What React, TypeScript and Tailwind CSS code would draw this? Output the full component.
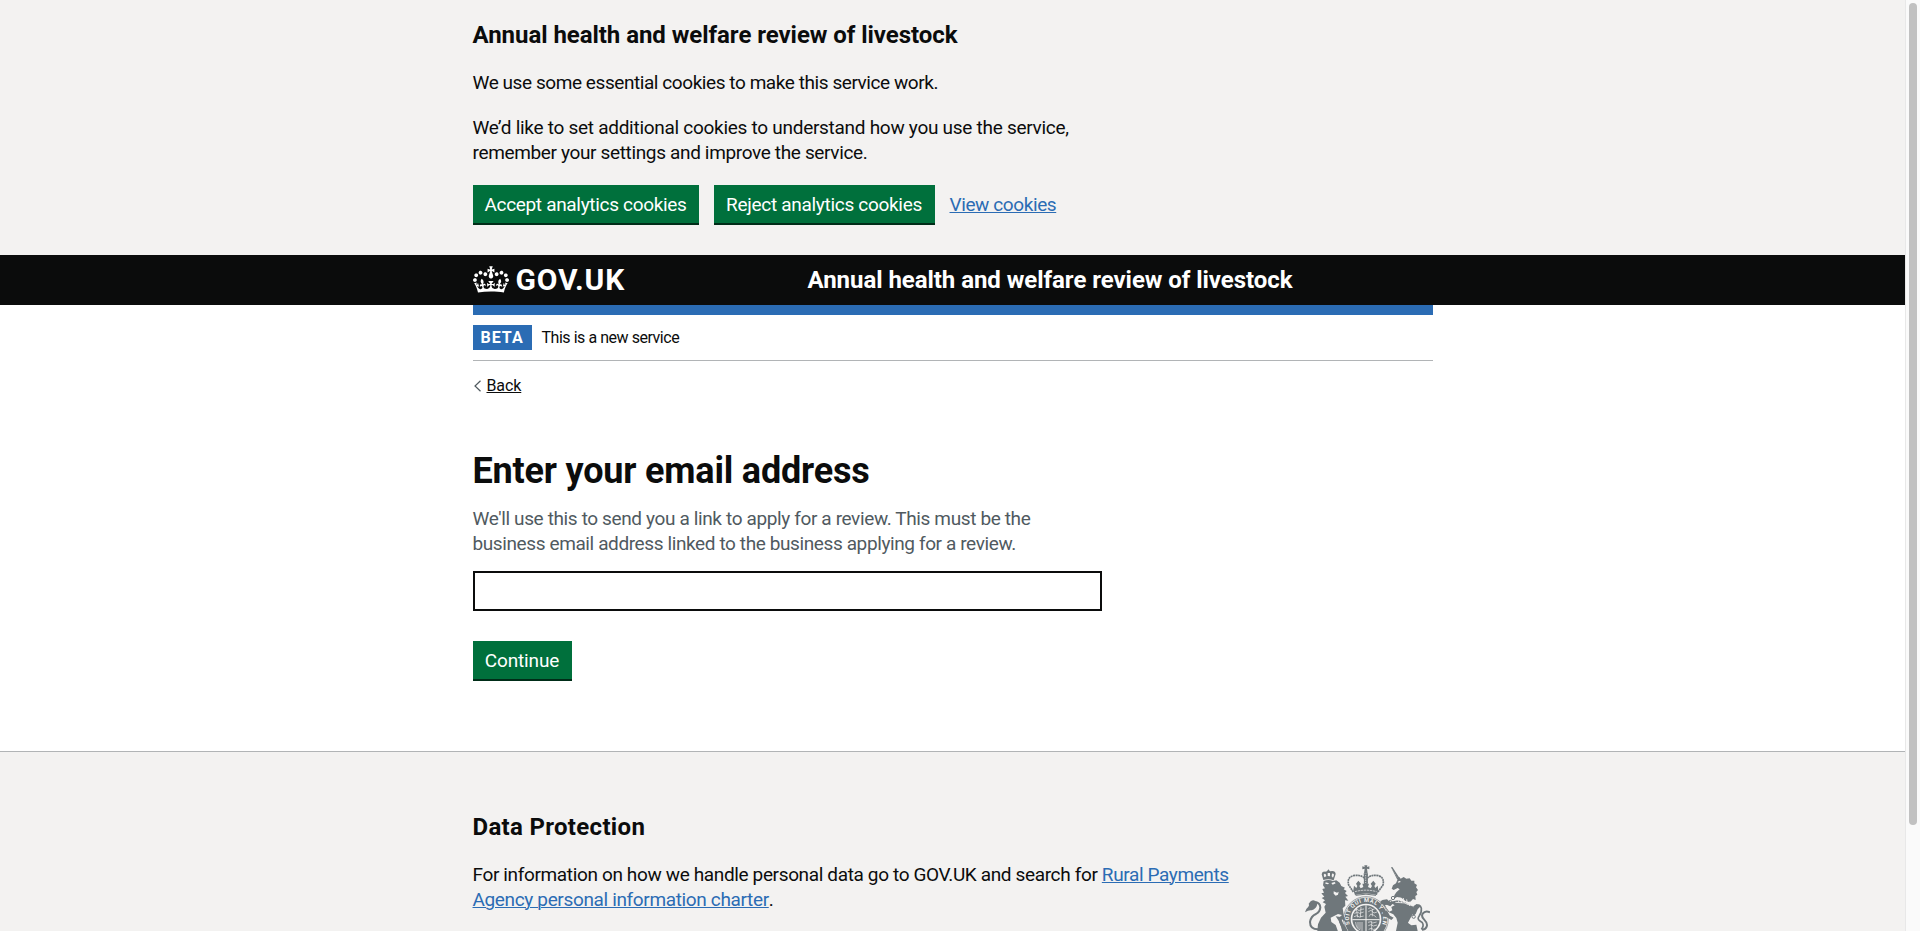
function Crown() {
  return (
    <svg className="-mt-[2px] h-[27px] w-9 shrink-0" viewBox="0 0 132 97" aria-hidden="true">
      <path
        fill="currentColor"
        fillRule="evenodd"
        d="M25 30.2c3.5 1.5 7.7-.2 9.1-3.7 1.5-3.6-.2-7.8-3.9-9.2-3.6-1.4-7.6.3-9.1 3.9-1.4 3.5.3 7.5 3.9 9zM9 39.5c3.6 1.5 7.8-.2 9.2-3.7 1.5-3.6-.2-7.8-3.9-9.1-3.6-1.5-7.6.2-9.1 3.8-1.4 3.5.3 7.5 3.8 9zM4.4 57.2c3.5 1.5 7.7-.2 9.1-3.8 1.5-3.6-.2-7.7-3.9-9.1-3.5-1.5-7.6.3-9.1 3.8-1.4 3.5.3 7.6 3.9 9.1zm38.3-21.4c3.5 1.5 7.7-.2 9.1-3.8 1.5-3.6-.2-7.7-3.9-9.1-3.6-1.5-7.6.3-9.1 3.8-1.3 3.6.4 7.7 3.9 9.1zm64.4-5.6c-3.6 1.5-7.8-.2-9.1-3.7-1.5-3.6.2-7.8 3.8-9.2 3.6-1.4 7.7.3 9.2 3.9 1.3 3.5-.4 7.5-3.9 9zm15.9 9.3c-3.6 1.5-7.7-.2-9.1-3.7-1.5-3.6.2-7.8 3.7-9.1 3.6-1.5 7.7.2 9.2 3.8 1.5 3.5-.3 7.5-3.8 9zm4.7 17.7c-3.6 1.5-7.8-.2-9.2-3.8-1.5-3.6.2-7.7 3.9-9.1 3.6-1.5 7.7.3 9.2 3.8 1.3 3.5-.4 7.6-3.9 9.1zM89.3 35.8c-3.6 1.5-7.8-.2-9.2-3.8-1.4-3.6.2-7.7 3.9-9.1 3.6-1.5 7.7.3 9.2 3.8 1.4 3.6-.3 7.7-3.9 9.1zM69.7 17.7l8.9 4.7V9.3l-8.9 2.8c-.2-.3-.5-.6-.9-.9L72.4 0H59.6l3.5 11.2c-.3.3-.6.5-.9.9l-8.8-2.8v13.1l8.8-4.7c.3.3.6.7.9.9l-5 15.4v.1c-.2.8-.4 1.6-.4 2.4 0 4.1 3.1 7.5 7 8.1h.2c.3 0 .7.1 1 .1.4 0 .7 0 1-.1h.2c4-.6 7.1-4.1 7.1-8.1 0-.8-.1-1.7-.4-2.4V34l-5.1-15.4c.4-.2.7-.6 1-.9zM66 92.8c16.9 0 32.8 1.1 47.1 3.2 4-16.9 8.9-26.7 14-33.5l-9.6-3.4c1 4.9 1.1 7.2 0 10.2-1.5-1.4-3-4.3-4.2-8.7L108.6 76c2.8-2 5-3.2 7.5-3.3-4.4 9.4-10 11.9-13.6 11.2-4.3-.8-6.3-4.6-5.6-7.9 1-4.7 5.7-5.9 8-.5 4.3-8.7-3-11.4-7.6-8.8 7.1-7.2 7.9-13.5 2.1-21.1-8 6.1-8.1 12.3-4.5 20.8-4.7-5.4-12.1-2.5-9.5 6.2 3.4-5.2 7.9-2 7.2 3.1-.6 4.3-6.4 7.8-13.5 7.2-10.3-.9-10.9-8-11.2-13.8 2.5-.5 7.1 1.8 11 7.3L80.2 60c-4.1 4.4-8 5.3-12.3 5.4 1.4-4.4 8-11.6 8-11.6H55.5s6.4 7.2 7.9 11.6c-4.2-.1-8-1-12.3-5.4l1.4 16.4c3.9-5.5 8.5-7.7 10.9-7.3-.3 5.8-.9 12.8-11.1 13.8-7.2.6-12.9-2.9-13.5-7.2-.7-5 3.8-8.3 7.1-3.1 2.7-8.7-4.6-11.6-9.4-6.2 3.7-8.5 3.6-14.7-4.6-20.8-5.8 7.6-5 13.9 2.2 21.1-4.7-2.6-11.9.1-7.7 8.8 2.3-5.5 7.1-4.2 8.1.5.7 3.3-1.3 7.1-5.7 7.9-3.5.7-9-1.8-13.5-11.2 2.5.1 4.7 1.3 7.5 3.3l-4.7-15.4c-1.2 4.4-2.7 7.2-4.3 8.7-1.1-3-.9-5.3 0-10.2l-9.5 3.4c5 6.9 9.9 16.7 14 33.5 14.8-2.1 30.8-3.2 47.7-3.2z"
      />
    </svg>
  );
}

function RoyalArms() {
  return (
    <svg className="h-[66px] w-[125px] shrink-0" viewBox="45 45 375 198" fill="#6f777b" stroke="none" aria-hidden="true">
      {/* Lion crown */}
      <path d="M100 90l-5-17q1-10 10-8l6-1 4-6 5 6q16-4 17 8l-6 19q-15-6-31-1z" />
      <path d="M103 82l-2-8q4-5 7 0l1 5zM113 78v-9h7v10zM125 79l1-8q6-2 6 4l-3 8z" fill="#f3f2f1" />
      {/* Lion */}
      <path d="M101 93q14-6 28 0l10-2 10 7 5 10 11 5-4 5 9 5-5 6 9 9-8 2 9 12-10-1 1 16-8 8 4 25 6 8-5 6-7-6-3 4 12 16 8 15H82l2-20 9-20 14-15-4-18 5-8-10-5 7-6-10-7 8-4-9-10 8-2-5-11 8-2-6-9z" />
      <path d="M107 97l10 3-3 3-8-2zM124 99l10-3 3 4-9 4zM131 124l10 4 5-3-2 9-7 3-6-6z" fill="#f3f2f1" />
      <path d="M122 203l22-11 12 3-10 9 1 12 7 16 3 15h-12l-8-22-13-9z" fill="#f3f2f1" />
      <path d="M137 199l15 2 8 22 6 20h-8l-10-28z" />
      <path d="M84 238q-24 0-24-22 3-18 18-24 12-7 13-20-1-14-15-16" fill="none" stroke="#6f777b" strokeWidth="6" />
      <path d="M82 160q-8-14-20-6l-6 7q3 4-1 9-7 5-10 17 12-8 20-6 13-4 16-15z" />

      {/* Central crown */}
      <path d="M223 46h9l-1 5 7-2v9l-7-2 2 14h-11l2-14-7 2v-9l7 2z" />
      <path
        d="M190 126L176 105q-6-23 14-28 22-4 34 8v20M264 126l15-21q5-23-14-28-22-4-34 8v20"
        fill="none"
        stroke="#6f777b"
        strokeWidth="5"
        strokeDasharray="6 1.5"
      />
      <path d="M221 70h13l-2 45h-9z" />
      <path d="M227 75v24" stroke="#f3f2f1" strokeWidth="2" strokeDasharray="4 3" />
      <path d="M190 121l2-14 7 7 3-6-4-7 7-9 8 9-5 7 4 7 8-4-3-10h20l-3 10 8 4 4-7-4-7 8-9 7 9-4 7 3 6 7-7 2 14-4 14q-31-9-66 0z" />
      <path d="M195 125q32-9 65 0" fill="none" stroke="#f3f2f1" strokeWidth="2" strokeDasharray="7 2" />
      <path d="M197 136q31-7 61 0" fill="none" stroke="#6f777b" strokeWidth="3" />

      {/* Garter and shield */}
      <circle cx="228" cy="207" r="55" fill="none" stroke="#6f777b" strokeWidth="18" />
      <circle cx="228" cy="207" r="67" fill="none" stroke="#6f777b" strokeWidth="2" />
      <path id="garter" d="M181 227A51 51 0 1 1 275 227" fill="none" />
      <text fill="#f3f2f1" fontFamily="Roboto, sans-serif" fontWeight="700" fontSize="17">
        <textPath href="#garter" startOffset="4" textLength="192">SOIT QUI MAL Y PEN</textPath>
      </text>
      <circle cx="228" cy="207" r="41" />
      <path d="M228 166v86M187 209h82" stroke="#f3f2f1" strokeWidth="3" />
      <path
        d="M195 181l8-3 3 4 9-4 7-1M193 190l10-3 6 3 12-4M192 200l9-3 7 4 13-3M199 174l4 28M213 171l-2 31M235 176l6-3 5 5 7 0M235 185l8-4 9 8 9-3M237 200l5-8 10 4 7 6M247 177v22M197 216q1 20 14 24M204 216v18M210 216v22M216 216v28M234 217l9-2 5 4 12-3M235 227l8-3 7 4 11-3M236 238l8-3 7 4 5-3M245 214v28"
        fill="none"
        stroke="#f3f2f1"
        strokeWidth="2"
      />

      {/* Unicorn */}
      <path d="M303 52l4-1 22 34-7 4z" />
      <path d="M306 57l17 27" stroke="#f3f2f1" strokeWidth="1" strokeDasharray="3 3" />
      <path d="M322 90l6-9 4 5 9-5 8 5 10-1 5 7 9 0 0 8 8 5-3 7 6 8-5 6 3 8-6 4 1 12-8-3-9 10-14-4-12-10-13-2-9 5 1-10 6-9 10-9-6-4-12 6-6-4 4-10 9-6z" />
      <path d="M323 95l7-3 2 4-7 2z" fill="#f3f2f1" />
      <path d="M302 155l22-4 20 6 18 8 9 5 1 16-10 17-8 15 2 25H318l5-25-4-14-9-11-15-7-9-14-8-10-7-1 1-9 14-2z" />
      <path d="M285 165l23-3 6 4-10 5 3 10-9 4-9-12z" fill="#f3f2f1" />
      <path d="M277 150l14-2 9 8 8 5-7 8-15-6-12-3zM280 181l12 3 8 13 11 6-7 7-14-8-13-5z" />
      <path
        d="M321 144l6 13M330 143l5 16M340 144l3 15M350 148l2 16M360 154l-2 14M316 157q27-2 52 11"
        fill="none"
        stroke="#f3f2f1"
        strokeWidth="2.5"
      />
      <circle cx="309" cy="144" r="5" fill="none" stroke="#6f777b" strokeWidth="3" />
      <circle cx="301" cy="155" r="4" fill="none" stroke="#6f777b" strokeWidth="3" />
      <circle cx="371" cy="200" r="5" fill="none" stroke="#6f777b" strokeWidth="3" />
      {/* Unicorn tail */}
      <path d="M380 162l-9 6-4 15 2 15 8-6 6-14 9-9z" />
      <path d="M377 168q13-8 17 7 1 14-6 22-8 10 2 16l7 5q6 10-3 20" fill="none" stroke="#6f777b" strokeWidth="5" />
      <path d="M420 187q-14-7-22 4-5 8 4 17 12 12 8 22-3 9-14 9" fill="none" stroke="#6f777b" strokeWidth="6" />
      <path d="M322 243l12-20 13-9 17 12 15-2 4 19z" />
    </svg>
  );
}

const button =
  "flex h-[38px] items-center justify-center whitespace-nowrap bg-[#00703c] pt-px text-[19px] leading-[19px] text-white shadow-[0_2px_0_#002d18]";
const link = "text-[#2b6cb4] underline decoration-1 underline-offset-1";

export default function App() {
  return (
    <div className="flex h-[931px] w-full overflow-hidden bg-white font-[Roboto,'Liberation_Sans',sans-serif] text-[19px] leading-[25px] text-[#0b0c0c]">
      <div className="flex min-w-0 flex-1 flex-col">
        <section className="h-[255px] shrink-0 bg-[#f3f2f1] pt-5">
          <div className="mx-auto w-[960px]">
            <h2 className="mb-5 text-2xl leading-[30px] font-bold tracking-[-0.05px]">
              Annual health and welfare review of livestock
            </h2>
            <p className="mb-5 tracking-[-0.43px]">We use some essential cookies to make this service work.</p>
            <p className="mb-5 whitespace-nowrap">
              <span className="tracking-[-0.28px]">
                We’d like to set additional cookies to understand how you use the service,
              </span>
              <br />
              <span className="tracking-[-0.35px]">remember your settings and improve the service.</span>
            </p>
            <div className="flex items-center gap-[15px]">
              <button className={`${button} w-[226px] tracking-[-0.32px]`}>Accept analytics cookies</button>
              <button className={`${button} w-[221px] tracking-[-0.3px]`}>Reject analytics cookies</button>
              <a className={`${link} tracking-[-0.4px]`}>View cookies</a>
            </div>
          </div>
        </section>

        <header className="h-[50px] shrink-0 bg-[#0b0c0c] text-white">
          <div className="mx-auto flex h-[50px] w-[960px] items-center">
            <div className="flex w-[335px] items-center gap-[7px]">
              <Crown />
              <span className="text-[30px] leading-[30px] font-bold tracking-[0.8px]">GOV.UK</span>
            </div>
            <span className="text-2xl leading-[30px] font-bold tracking-[-0.05px]">
              Annual health and welfare review of livestock
            </span>
          </div>
        </header>

        <div className="mx-auto w-[960px] shrink-0">
          <div className="h-[10px] bg-[#2b6cb4]" />
          <div className="flex items-center gap-[10px] border-b border-[#b1b4b6] py-[10px] text-base leading-[25px]">
            <strong className="w-[59px] bg-[#2b6cb4] pl-2 font-bold tracking-[1px] text-white">BETA</strong>
            <span className="tracking-[-0.46px]">This is a new service</span>
          </div>
          <div className="mt-[15px] flex h-5 items-center text-base leading-5">
            <svg className="mr-[6px] ml-[1px] h-3 w-[7px]" viewBox="0 0 7 12" fill="none" stroke="#505a5f" strokeWidth="1.2">
              <path d="M6.5.8L1 6l5.5 5.2" />
            </svg>
            <a className="tracking-[-0.1px] underline decoration-1 underline-offset-1">Back</a>
          </div>
        </div>

        <main className="mx-auto mt-[55px] w-[960px] shrink-0">
          <h1 className="mb-[15px] text-4xl leading-10 font-bold tracking-[-0.19px]">Enter your email address</h1>
          <p className="mb-[15px] whitespace-nowrap text-[#505a5f]">
            <span className="tracking-[-0.37px]">We'll use this to send you a link to apply for a review. This must be the</span>
            <br />
            <span className="tracking-[-0.39px]">business email address linked to the business applying for a review.</span>
          </p>
          <input className="mb-[30px] block h-10 w-[629px] border-2 border-[#0b0c0c] bg-white px-[5px] outline-none" type="email" />
          <button className={`${button} w-[99px] tracking-[-0.15px]`}>Continue</button>
        </main>

        <footer className="mt-[72px] flex-1 border-t border-[#b1b4b6] bg-[#f3f2f1] pt-[60px]">
          <div className="mx-auto flex w-[960px] items-start justify-between">
            <div>
              <h2 className="mb-5 text-2xl leading-[30px] font-bold tracking-[0.32px]">Data Protection</h2>
              <p className="whitespace-nowrap">
                <span className="tracking-[-0.36px]">
                  For information on how we handle personal data go to GOV.UK and search for{" "}
                </span>
                <a className={`${link} tracking-[-0.38px]`}>Rural Payments</a>
                <br />
                <a className={`${link} tracking-[-0.35px]`}>Agency personal information charter</a>.
              </p>
            </div>
            <div className="mr-[3px] pt-[53px]">
              <RoyalArms />
            </div>
          </div>
        </footer>
      </div>

      <div className="flex w-[15px] shrink-0 justify-center border-l border-[#e8e8e8] bg-[#fafafa] pt-[3px]">
        <div className="h-[822px] w-2 rounded-full bg-[#c1c1c1]" />
      </div>
    </div>
  );
}
